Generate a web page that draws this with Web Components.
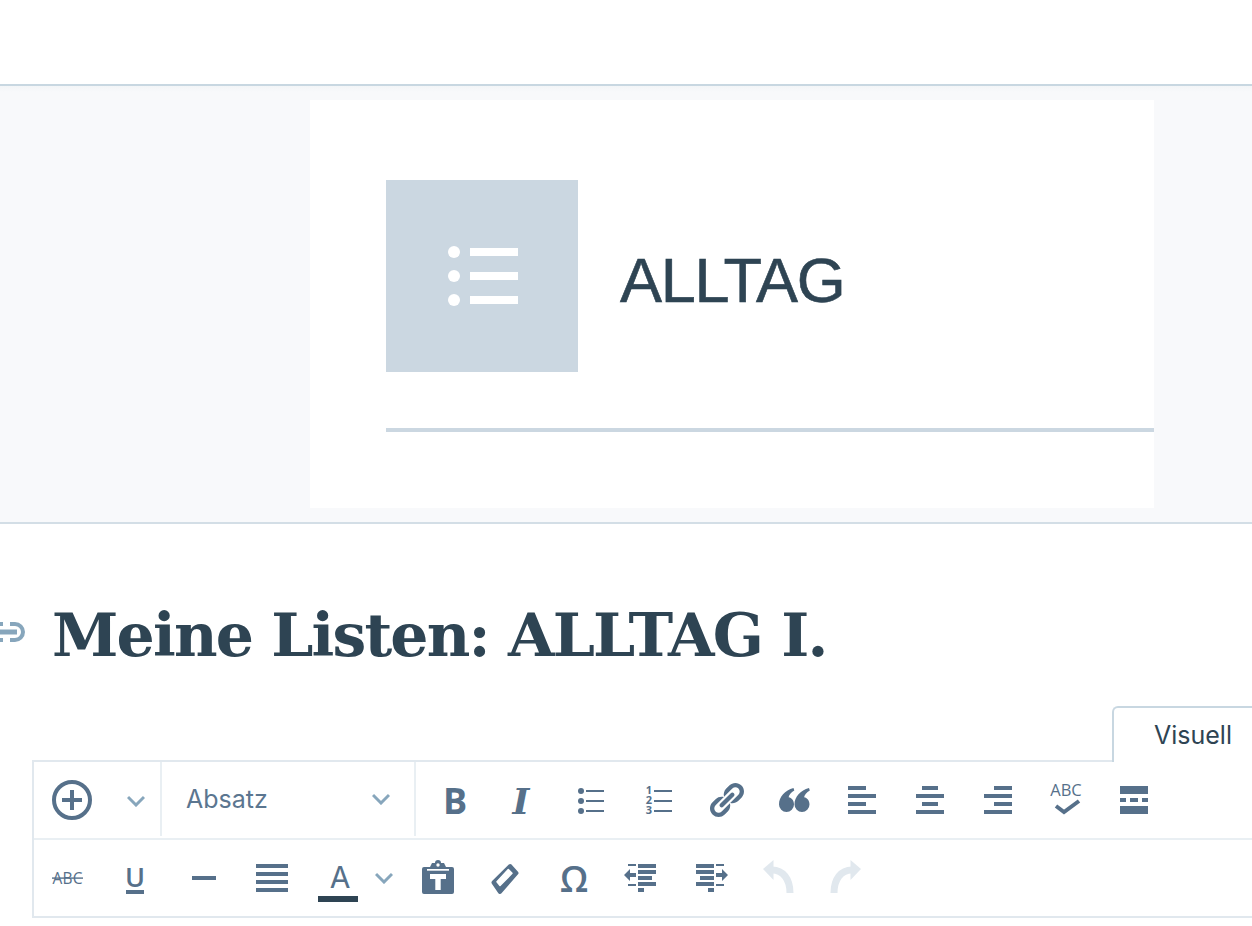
<!DOCTYPE html>
<html lang="de">
<head>
<meta charset="utf-8">
<title>Meine Listen: ALLTAG I.</title>
<style>
    html, body { margin: 0; height: 926px; overflow: hidden; background: #fff; }
</style>
</head>
<body>
<editor-page>
    <featured-image label="ALLTAG"></featured-image>
    <post-title>Meine Listen: ALLTAG I.</post-title>
    <editor-tabs>Visuell</editor-tabs>
    <editor-toolbar></editor-toolbar>
</editor-page>

<script>
// icons: every svg is a 40x40 box, drawn 1:1 in page pixels
const SANS = "'Open Sans', 'Noto Sans', sans-serif";
const QUOTE = 'M19.5 8l.8 2.6C17 12.5 15 15 14.6 17.2c3 .4 5.4 3.3 5.4 7.3a7.5 7.5 0 1 1-15 0C5 16.5 11 10.5 19.5 8z';
const ICONS = {
    plus: `<circle cx="20" cy="20" r="18" fill="none" stroke="currentColor" stroke-width="4"/><rect x="10" y="18" width="20" height="4"/><rect x="18" y="10" width="4" height="20"/>`,
    bold: `<text x="21" y="34" text-anchor="middle" font-family="${SANS}" font-weight="700" font-size="36">B</text>`,
    italic: `<text x="19" y="34" text-anchor="middle" font-family="'DejaVu Serif', serif" font-style="italic" font-weight="700" font-size="36">I</text>`,
    ul: `<circle cx="11" cy="11" r="3"/><circle cx="11" cy="21" r="3"/><circle cx="11" cy="31" r="3"/><rect x="16" y="10" width="18" height="2"/><rect x="16" y="20" width="18" height="2"/><rect x="16" y="30" width="18" height="2"/>`,
    ol: `<g font-family="${SANS}" font-weight="700" font-size="11" text-anchor="middle"><text x="11" y="14">1</text><text x="11" y="24">2</text><text x="11" y="34">3</text></g><rect x="16" y="10" width="18" height="2"/><rect x="16" y="20" width="18" height="2"/><rect x="16" y="30" width="18" height="2"/>`,
    link: `<path transform="scale(2)" d="M17.74 2.76c1.68 1.69 1.68 4.41 0 6.1l-1.53 1.52c-1.12 1.12-2.7 1.47-4.14 1.09l2.62-2.61.76-.77.76-.76c.84-.84.84-2.2 0-3.04-.84-.85-2.2-.85-3.04 0l-.77.76-3.38 3.38c-.37-1.44-.02-3.02 1.1-4.14l1.52-1.53c1.69-1.68 4.42-1.68 6.1 0zM8.59 13.43l5.34-5.34c.42-.42.42-1.1 0-1.52-.44-.43-1.13-.39-1.53 0l-5.33 5.34c-.42.42-.42 1.1 0 1.52.44.43 1.13.39 1.52 0zm-.76 2.29l4.14-4.15c.38 1.44.03 3.02-1.09 4.14l-1.52 1.53c-1.69 1.68-4.42 1.68-6.1 0-1.68-1.68-1.68-4.42 0-6.1l1.53-1.52c1.12-1.12 2.7-1.47 4.14-1.1l-4.14 4.15c-.85.84-.85 2.2 0 3.05.84.84 2.2.84 3.04 0z"/>`,
    quote: `<path d="${QUOTE}"/><path transform="translate(15.5 0)" d="${QUOTE}"/>`,
    alignleft: `<rect x="6" y="6" width="18" height="4"/><rect x="6" y="14" width="28" height="4"/><rect x="6" y="22" width="18" height="4"/><rect x="6" y="30" width="28" height="4"/>`,
    aligncenter: `<rect x="12" y="6" width="16" height="4"/><rect x="6" y="14" width="28" height="4"/><rect x="12" y="22" width="16" height="4"/><rect x="6" y="30" width="28" height="4"/>`,
    alignright: `<rect x="16" y="6" width="18" height="4"/><rect x="6" y="14" width="28" height="4"/><rect x="16" y="22" width="18" height="4"/><rect x="6" y="30" width="28" height="4"/>`,
    spell: `<text x="20" y="16" text-anchor="middle" font-family="${SANS}" font-weight="500" font-size="16.5">ABC</text><path d="M10 26l8 6 15-11" fill="none" stroke="currentColor" stroke-width="4"/>`,
    more: `<rect x="6" y="6" width="28" height="8"/><rect x="6" y="18" width="6" height="4"/><rect x="16" y="18" width="8" height="4"/><rect x="28" y="18" width="6" height="4"/><rect x="6" y="26" width="28" height="8"/>`,
    strike: `<text x="19.5" y="26" text-anchor="middle" font-family="${SANS}" font-size="15.5" textLength="30">ABC</text><rect x="4" y="19.4" width="31" height="1.4"/>`,
    underline: `<text x="19" y="29" text-anchor="middle" font-family="${SANS}" font-weight="600" font-size="27">U</text><rect x="10" y="32" width="18" height="4"/>`,
    hr: `<rect x="8" y="18" width="24" height="4"/>`,
    justify: `<rect x="4" y="6" width="32" height="4"/><rect x="4" y="14" width="32" height="4"/><rect x="4" y="22" width="32" height="4"/><rect x="4" y="30" width="32" height="4"/>`,
    color: `<text x="20" y="30" text-anchor="middle" font-family="Inter, sans-serif" font-size="30">A</text><rect x="-2" y="38" width="40" height="6" style="fill:#2e4453"/>`,
    paste: `<path d="M12 9l2-4h3a3 3 0 0 1 6 0h3l2 4h6a2 2 0 0 1 2 2v23a2 2 0 0 1-2 2H6a2 2 0 0 1-2-2V11a2 2 0 0 1 2-2z"/><g fill="#fff"><circle cx="20" cy="7" r="1.7"/><rect x="9" y="11" width="22" height="1.7"/><rect x="12" y="16" width="16" height="5"/><rect x="17.3" y="16" width="5.4" height="16"/></g>`,
    eraser: `<path d="M24.2 8L30.5 15 14 34 7.5 24.5z" stroke="currentColor" stroke-width="4" stroke-linejoin="round"/><path d="M22.3 11.5L26 15.3 14 27.5 11 23.7z" fill="#fff" stroke="#fff" stroke-width="1.5" stroke-linejoin="round"/>`,
    omega: `<text x="20" y="34" text-anchor="middle" font-family="${SANS}" font-weight="600" font-size="36">Ω</text>`,
    outdent: `<rect x="16" y="6" width="18" height="4"/><rect x="16" y="12" width="18" height="4"/><rect x="16" y="18" width="14" height="4"/><rect x="16" y="24" width="18" height="4"/><rect x="16" y="30" width="6" height="4"/><rect x="6" y="6" width="8" height="2"/><rect x="6" y="26" width="8" height="2"/><path d="M2 17l6-6v4h6v4H8v4z"/>`,
    indent: `<rect x="6" y="6" width="18" height="4"/><rect x="6" y="12" width="18" height="4"/><rect x="10" y="18" width="14" height="4"/><rect x="6" y="24" width="18" height="4"/><rect x="18" y="30" width="6" height="4"/><rect x="26" y="6" width="8" height="2"/><rect x="26" y="26" width="8" height="2"/><path d="M38 17l-6-6v4h-6v4h6v4z"/>`,
    undo: `<path d="M5 11L15.5 2v20z"/><path d="M14 12c11 0 18 9 18 23" fill="none" stroke="currentColor" stroke-width="7"/>`,
    redo: `<path d="M35 11L24.5 2v20z"/><path d="M26 12c-11 0-18 9-18 23" fill="none" stroke="currentColor" stroke-width="7"/>`
};

const CHEVRON = `<svg width="18" height="12" viewBox="0 0 18 12"><path d="M1 2l8 8 8-8" fill="none" stroke="#87a6bc" stroke-width="3"/></svg>`;

class EditorPage extends HTMLElement {
    constructor() {
        super();
        this.attachShadow({ mode: 'open' });
        this.shadowRoot.innerHTML = `
            <style>
                :host { display: flex; flex-direction: column; width: 1252px; height: 926px; padding-top: 84px; box-sizing: border-box; overflow: hidden; background: #fff; }
            </style>
            <slot></slot>
        `;
    }
}

class FeaturedImage extends HTMLElement {
    constructor() {
        super();
        this.attachShadow({ mode: 'open' });
    }

    connectedCallback() {
        this.shadowRoot.innerHTML = `
            <style>
                :host { display: block; box-sizing: border-box; height: 440px; padding: 14px 98px 14px 310px; background: linear-gradient(#f3f5f7, #f8f9fb 6px); border-top: 2px solid #c8d7e1; border-bottom: 2px solid #d3dee6; }
                .image { height: 408px; box-sizing: border-box; padding: 80px 0 0 76px; background: #fff; }
                .row { display: flex; align-items: center; gap: 42px; }
                .thumb { width: 192px; height: 192px; background: #cbd7e1; display: flex; align-items: center; justify-content: center; }
                .label { font: 400 63px/1 'Liberation Sans', Arial, sans-serif; color: #2e4453; letter-spacing: -1.3px; -webkit-text-stroke: 0.6px #2e4453; filter: blur(0.4px); position: relative; top: 4px; }
                .rule { height: 4px; margin-top: 56px; background: #cbd7e1; }
            </style>
            <div class="image">
                <div class="row">
                    <div class="thumb">
                        <svg width="72" height="64" viewBox="0 0 72 64" fill="#fff"><circle cx="8" cy="8" r="6"/><circle cx="8" cy="32" r="6"/><circle cx="8" cy="56" r="6"/><rect x="24" y="4" width="48" height="8"/><rect x="24" y="28" width="48" height="8"/><rect x="24" y="52" width="48" height="8"/></svg>
                    </div>
                    <span class="label">${this.getAttribute('label')}</span>
                </div>
                <div class="rule"></div>
            </div>
        `;
    }
}

class PostTitle extends HTMLElement {
    constructor() {
        super();
        this.attachShadow({ mode: 'open' });
        this.shadowRoot.innerHTML = `
            <style>
                :host { display: block; position: relative; height: 182px; box-sizing: border-box; padding: 71px 0 0 52px; }
                h1 { margin: 0; font: 700 60px/80px 'DejaVu Serif', 'Liberation Serif', serif; color: #2e4453; white-space: nowrap; letter-spacing: -1.82px; }
                .anchor { position: absolute; left: 0; top: 97px; }
            </style>
            <svg class="anchor" width="26" height="22" viewBox="0 0 26 22" fill="none" stroke="#87a6bc" stroke-width="4"><path d="M10 3h5a8 8 0 0 1 0 16h-5"/><path d="M0 3h3M0 19h3"/><path d="M0 11h17" stroke-width="5"/></svg>
            <h1><slot></slot></h1>
        `;
    }
}

class EditorTabs extends HTMLElement {
    constructor() {
        super();
        this.attachShadow({ mode: 'open' });
        this.shadowRoot.innerHTML = `
            <style>
                :host { display: flex; justify-content: flex-end; height: 54px; }
                .tab { position: relative; z-index: 1; box-sizing: border-box; width: 140px; height: 56px; padding: 11px 0 0 40px; background: #fff; border: 2px solid #c8d7e1; border-width: 2px 0 0 2px; border-radius: 6px 0 0 0; font: 400 25px/32px Inter, sans-serif; color: #2e4453; }
            </style>
            <div class="tab"><slot></slot></div>
        `;
    }
}

class TbButton extends HTMLElement {
    constructor() {
        super();
        this.attachShadow({ mode: 'open' });
    }

    connectedCallback() {
        const disabled = this.hasAttribute('disabled');
        this.shadowRoot.innerHTML = `
            <style>
                :host { display: flex; align-items: center; justify-content: center; flex: none; width: 68px; color: ${disabled ? '#e1e8ee' : '#56708a'}; }
                svg { display: block; overflow: visible; fill: currentColor; }
            </style>
            <svg width="40" height="40" viewBox="0 0 40 40">${ICONS[this.getAttribute('icon')]}</svg>
        `;
    }
}

class TbFormat extends HTMLElement {
    constructor() {
        super();
        this.attachShadow({ mode: 'open' });
        this.shadowRoot.innerHTML = `
            <style>
                :host { display: flex; align-items: center; justify-content: space-between; box-sizing: border-box; width: 252px; padding: 0 24px 0 24px; font: 400 25px/32px Inter, sans-serif; color: #5b7690; }
                span { margin-top: -2px; }
                svg { display: block; margin-top: -2px; }
            </style>
            <span><slot></slot></span>
            ${CHEVRON}
        `;
    }
}

class TbChevron extends HTMLElement {
    constructor() {
        super();
        this.attachShadow({ mode: 'open' });
        this.shadowRoot.innerHTML = `
            <style>
                :host { display: flex; align-items: center; justify-content: center; flex: none; }
                svg { display: block; }
            </style>
            ${CHEVRON}
        `;
    }
}

class EditorToolbar extends HTMLElement {
    constructor() {
        super();
        this.attachShadow({ mode: 'open' });
    }

    button(icon, disabled) {
        return `<tb-button icon="${icon}"${disabled ? ' disabled' : ''}></tb-button>`;
    }

    connectedCallback() {
        const first = ['bold', 'italic', 'ul', 'ol', 'link', 'quote', 'alignleft', 'aligncenter', 'alignright', 'spell', 'more'];
        this.shadowRoot.innerHTML = `
            <style>
                :host { display: block; box-sizing: border-box; width: 1220px; margin-left: 32px; border: 2px solid #e1e8ee; border-right: 0; }
                .row { display: flex; height: 76px; }
                .row + .row { height: 78px; border-top: 2px solid #e9eff3; box-sizing: border-box; }
                .insert { display: flex; flex: none; width: 126px; box-sizing: border-box; padding-left: 18px; }
                .insert tb-button { width: 40px; }
                .insert tb-chevron { margin: 2px 0 0 35px; }
                .sep { flex: none; width: 2px; margin-bottom: 2px; background: #e9eff3; }
                .group { display: flex; padding-left: 4px; }
                .color { width: 30px; padding-left: 1px; box-sizing: border-box; justify-content: flex-start; }
            </style>
            <div class="row">
                <div class="insert">
                    ${this.button('plus')}
                    <tb-chevron></tb-chevron>
                </div>
                <div class="sep"></div>
                <tb-format>Absatz</tb-format>
                <div class="sep"></div>
                <div class="group">${first.map((i) => this.button(i)).join('')}</div>
            </div>
            <div class="row">
                ${['strike', 'underline', 'hr', 'justify', 'color'].map((i) => this.button(i)).join('')}
                <tb-chevron class="color"></tb-chevron>
                ${['paste', 'eraser', 'omega', 'outdent', 'indent'].map((i) => this.button(i)).join('')}
                ${this.button('undo', true)}
                ${this.button('redo', true)}
            </div>
        `;
    }
}

customElements.define('editor-page', EditorPage);
customElements.define('featured-image', FeaturedImage);
customElements.define('post-title', PostTitle);
customElements.define('editor-tabs', EditorTabs);
customElements.define('tb-button', TbButton);
customElements.define('tb-format', TbFormat);
customElements.define('tb-chevron', TbChevron);
customElements.define('editor-toolbar', EditorToolbar);
</script>
</body>
</html>
